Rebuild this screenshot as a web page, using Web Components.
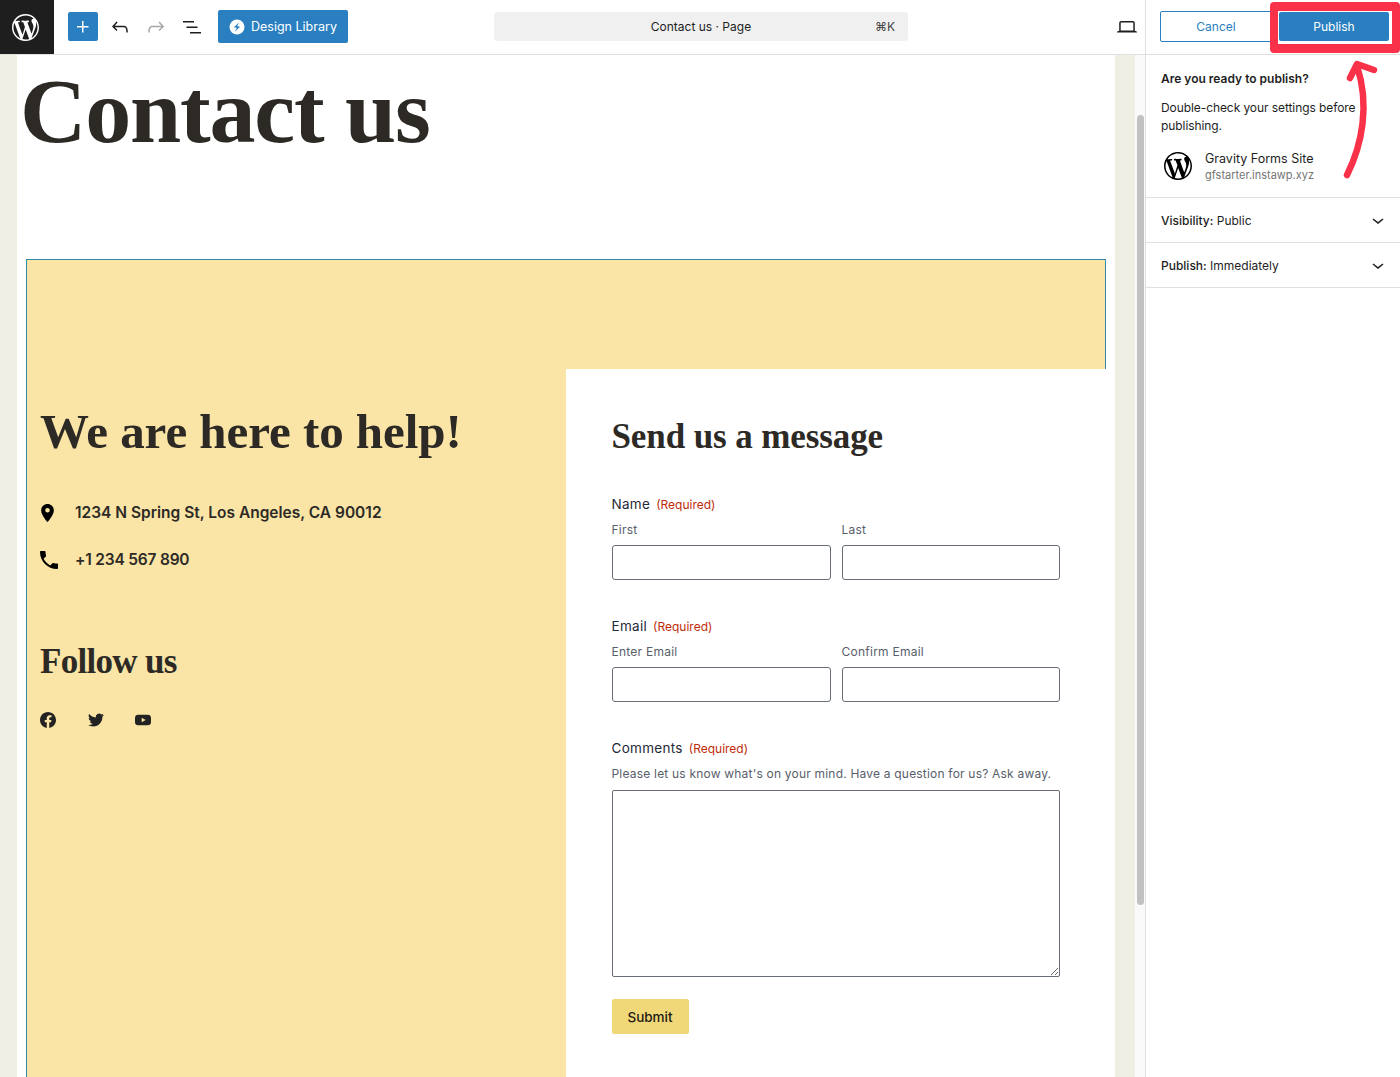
<!DOCTYPE html>
<html lang="en">
<head>
<meta charset="utf-8">
<title>Contact us - Page</title>
<style>
html, body { margin: 0; height: 100%; overflow: hidden; background: #fff; }
body { font-family: Inter, "Liberation Sans", sans-serif; }
</style>
</head>
<body>
<editor-app>
  <editor-topbar slot="top"></editor-topbar>
  <contact-canvas slot="canvas">
    <contact-info slot="info"></contact-info>
    <contact-form slot="form">
      <form-field label="Name">
        <sub-input label="First"></sub-input>
        <sub-input label="Last"></sub-input>
      </form-field>
      <form-field label="Email">
        <sub-input label="Enter Email"></sub-input>
        <sub-input label="Confirm Email"></sub-input>
      </form-field>
    </contact-form>
  </contact-canvas>
  <publish-panel slot="side">
    <panel-row label="Visibility:" value="Public"></panel-row>
    <panel-row label="Publish:" value="Immediately"></panel-row>
  </publish-panel>
</editor-app>

<script>
const WP_LOGO = 'M20 10c0-5.51-4.49-10-10-10C4.48 0 0 4.49 0 10c0 5.52 4.48 10 10 10 5.51 0 10-4.48 10-10zM7.78 15.37L4.37 6.22c.55-.02 1.17-.08 1.17-.08.5-.06.44-1.13-.06-1.11 0 0-1.45.11-2.37.11-.18 0-.37 0-.58-.01C4.12 2.69 6.87 1.11 10 1.11c2.33 0 4.45.87 6.05 2.34-.68-.11-1.65.39-1.65 1.58 0 .74.45 1.36.9 2.1.35.61.55 1.36.55 2.46 0 1.49-1.4 5-1.4 5l-3.03-8.37c.54-.02.82-.17.82-.17.5-.05.44-1.25-.06-1.22 0 0-1.44.12-2.38.12-.87 0-2.33-.12-2.33-.12-.5-.03-.56 1.2-.06 1.22l.92.08 1.26 3.41zM17.41 10c.24-.64.74-1.87.43-4.25.7 1.29 1.05 2.71 1.05 4.25 0 3.29-1.73 6.24-4.4 7.78.97-2.59 1.94-5.2 2.92-7.78zM6.1 18.09C3.12 16.65 1.11 13.53 1.11 10c0-1.3.23-2.48.72-3.59C3.25 10.3 4.67 14.2 6.1 18.09zm4.03-6.63l2.58 6.98c-.86.29-1.76.45-2.71.45-.79 0-1.57-.11-2.29-.33.81-2.38 1.62-4.74 2.42-7.1z';

class EditorApp extends HTMLElement {
  constructor() {
    super();
    this.attachShadow({ mode: 'open' });
    this.shadowRoot.innerHTML = `
<style>
:host { display: grid; grid-template-rows: 55px 1fr; grid-template-columns: 1145px 255px; width: 1400px; height: 1077px; overflow: hidden; position: relative; }
.top { grid-column: 1 / 3; }
.main { display: flex; min-height: 0; overflow: hidden; background: #f0efe6; }
.canvas { width: 1098px; margin-left: 17px; background: #fff; overflow: hidden; }
.track { width: 10px; margin-left: 20px; background: #fafafa; }
.thumb { width: 7px; height: 790px; margin: 60px 0 0 2px; background: #c1c1c1; border-radius: 4px; }
.side { min-height: 0; }
.callout { position: absolute; left: 1270px; top: 2px; width: 130px; height: 51px; box-sizing: border-box; border: solid #f9324a; border-width: 9px 8px; border-radius: 4px; }
.arrow { position: absolute; left: 1330px; top: 50px; }
</style>
<div class="top"><slot name="top"></slot></div>
<div class="main">
  <div class="canvas"><slot name="canvas"></slot></div>
  <div class="track"><div class="thumb"></div></div>
</div>
<div class="side"><slot name="side"></slot></div>
<div class="callout"></div>
<svg class="arrow" width="60" height="135" viewBox="0 0 60 135" fill="none" stroke="#f9324a" stroke-width="6.5" stroke-linecap="round" stroke-linejoin="round">
  <path d="M17 125C32 95 40 55 27 16"/>
  <path d="M20 28L27 14L44 20"/>
</svg>`;
  }
}

class EditorTopbar extends HTMLElement {
  constructor() {
    super();
    this.attachShadow({ mode: 'open' });
    this.shadowRoot.innerHTML = `
<style>
:host { display: grid; grid-template-columns: 494px 414px 237px 255px; height: 55px; box-sizing: border-box; border-bottom: 1px solid #e0e0e0; background: #fff; font-size: 13px; color: #1e1e1e; }
.left, .right, .side { display: flex; align-items: center; }
.logo { width: 54px; height: 54px; box-sizing: border-box; padding-right: 3px; background: #1e1e1e; display: flex; align-items: center; justify-content: center; }
.add { width: 30px; height: 29px; margin: 0 4px 1px 14px; background: #2a7fc1; border-radius: 2px; display: flex; align-items: center; justify-content: center; }
.tool { width: 36px; height: 36px; display: flex; align-items: center; justify-content: center; }
.library { width: 130px; height: 33px; margin: 0 0 1px 8px; background: #2a7fc1; color: #fff; font-size: 12.5px; border-radius: 2px; display: flex; align-items: center; gap: 6px; padding-left: 11px; box-sizing: border-box; }
.pill { height: 29px; margin-top: 12px; background: #f0f0f0; border-radius: 4px; display: flex; align-items: center; font-size: 12px; padding: 0 13px; }
.pill .title { flex: 1; text-align: center; padding-left: 20px; }
.pill .key { color: #444; }
.right { justify-content: flex-end; }
.side { border-left: 1px solid #e0e0e0; padding: 0 0 1px 14px; gap: 7px; }
.cancel, .publish { font-size: 12px; display: flex; align-items: center; justify-content: center; border-radius: 2px; box-sizing: border-box; }
.cancel { width: 112px; height: 31px; border: 1.5px solid #2a7fc1; color: #2a7fc1; }
.publish { width: 110px; height: 29px; background: #2a7fc1; color: #fff; }
</style>
<div class="left">
  <div class="logo"><svg width="27" height="27" viewBox="0 0 20 20" fill="#fff"><path d="${WP_LOGO}"/></svg></div>
  <div class="add"><svg width="24" height="24" viewBox="0 0 24 24" fill="#fff"><path d="M11 12.5V17.5H12.5V12.5H17.5V11H12.5V6H11V11H6V12.5H11Z"/></svg></div>
  <div class="tool"><svg width="24" height="24" viewBox="0 0 24 24" fill="#1e1e1e"><path d="M18.3 11.7c-.6-.6-1.4-.9-2.3-.9H6.7l2.9-3.3-1.1-1-4.5 5L8.5 16l1-1-2.7-2.7H16c.5 0 .9.2 1.3.5 1 1 1 3.4 1 4.5v.3h1.5v-.2c0-1.5 0-4.3-1.5-5.7z"/></svg></div>
  <div class="tool"><svg width="24" height="24" viewBox="0 0 24 24" fill="#a8a8a8"><path d="M15.6 6.5l-1.1 1 2.9 3.3H8c-.9 0-1.7.3-2.3.9-1.4 1.5-1.4 4.2-1.4 5.6v.2h1.5v-.3c0-1.1 0-3.5 1-4.5.3-.3.7-.5 1.3-.5h9.2L14.5 15l1.1 1.1 4.6-4.6-4.6-5z"/></svg></div>
  <div class="tool"><svg width="24" height="24" viewBox="0 0 24 24" fill="#1e1e1e"><path d="M3 6h11v1.5H3V6zm3.5 5.5h11V13h-11v-1.5zM21 17H10v1.5h11V17z"/></svg></div>
  <div class="library">
    <svg width="16" height="16" viewBox="0 0 16 16"><circle cx="8" cy="8" r="7.5" fill="#fff"/><path d="M10 3.4L4.8 8.3l3 .4-1.9 3.9 5.3-4.9-3-.4z" fill="#2a7fc1"/></svg>
    <span>Design Library</span>
  </div>
</div>
<div class="pill"><span class="title">Contact us · Page</span><span class="key">⌘K</span></div>
<div class="right"><div class="tool"><svg width="24" height="24" viewBox="0 0 24 24" fill="#1e1e1e"><path d="M20.5 16h-.7V8c0-1.1-.9-2-2-2H6.2c-1.1 0-2 .9-2 2v8h-.7c-.8 0-1.5.7-1.5 1.5h20c0-.8-.7-1.5-1.5-1.5zM5.7 8c0-.3.2-.5.5-.5h11.6c.3 0 .5.2.5.5v7.600H5.7V8z"/></svg></div></div>
<div class="side">
  <div class="cancel">Cancel</div>
  <div class="publish">Publish</div>
</div>`;
  }
}

class ContactCanvas extends HTMLElement {
  constructor() {
    super();
    this.attachShadow({ mode: 'open' });
    this.shadowRoot.innerHTML = `
<style>
:host { display: block; color: #2d2a26; }
h1 { margin: 0; padding: 10px 0 0 3px; font: 700 92px/1 "Liberation Serif", serif; letter-spacing: -1.2px; height: 204px; box-sizing: border-box; }
.group { display: flex; margin-left: 9px; width: 1080px; height: 900px; box-sizing: border-box; padding-top: 109px; border: 1px solid #2e8aa8; border-bottom: 0; background: #fae5a6; }
.info { width: 539px; }
.form { width: 541px; margin-right: -1px; background: #fff; }
</style>
<h1>Contact us</h1>
<div class="group">
  <div class="info"><slot name="info"></slot></div>
  <div class="form"><slot name="form"></slot></div>
</div>`;
  }
}

class ContactInfo extends HTMLElement {
  constructor() {
    super();
    this.attachShadow({ mode: 'open' });
    this.shadowRoot.innerHTML = `
<style>
:host { display: block; padding: 35px 0 0 13px; }
h2, h3 { margin: 0; font-family: "Liberation Serif", serif; font-weight: 700; }
h2 { font-size: 49px; line-height: 56px; letter-spacing: -.05px; }
h3 { font-size: 35px; line-height: 40px; letter-spacing: -.7px; margin-top: 70px; }
.line { display: flex; align-items: center; height: 24px; font: 600 15.5px/24px Inter, sans-serif; }
.line .ico { width: 35px; display: flex; }
.line.addr { margin-top: 41px; }
.line.tel { margin-top: 23px; letter-spacing: -.2px; }
.social { display: flex; gap: 31.5px; margin-top: 30px; }
.social svg { display: block; }
</style>
<h2>We are here to help!</h2>
<div class="line addr"><span class="ico"><svg width="13" height="18" viewBox="4 1 16 22" fill="#000" style="margin-left:1px"><path d="M12 1C7.7 1 4.2 4.5 4.2 8.8 4.2 14.8 12 23 12 23s7.8-8.200 7.800-14.200C19.800 4.500 16.300 1 12 1zm0 10.500a2.800 2.800 0 1 1 0-5.600 2.800 2.800 0 0 1 0 5.600z"/></svg></span><span>1234 N Spring St, Los Angeles, CA 90012</span></div>
<div class="line tel"><span class="ico"><svg width="18" height="18" viewBox="3 3 18 18" fill="#000"><path d="M6.620 10.790c1.440 2.830 3.760 5.140 6.590 6.590l2.200-2.200c.27-.27.67-.36 1.020-.24 1.120.37 2.330.57 3.570.57.55 0 1 .45 1 1V20c0 .55-.45 1-1 1-9.390 0-17-7.610-17-17 0-.55.45-1 1-1h3.500c.55 0 1 .45 1 1 0 1.250.2 2.450.57 3.570.11.35.03.74-.25 1.020l-2.200 2.200z"/></svg></span><span>+1 234 567 890</span></div>
<h3>Follow us</h3>
<div class="social">
  <svg width="16" height="16" viewBox="0 0 24 24" fill="#222"><path d="M24 12.070C24 5.400 18.630 0 12 0S0 5.400 0 12.070c0 6.030 4.390 11.020 10.130 11.930v-8.440H7.080v-3.490h3.050V9.410c0-3.020 1.790-4.690 4.530-4.690 1.310 0 2.680.24 2.680.24v2.970h-1.510c-1.490 0-1.960.93-1.960 1.890v2.250h3.330l-.53 3.490h-2.800V24C19.610 23.090 24 18.100 24 12.070z"/></svg>
  <svg width="16" height="16" viewBox="0 0 24 24" fill="#222"><path d="M23.950 4.570a10 10 0 0 1-2.820.77 4.960 4.960 0 0 0 2.160-2.720c-.95.55-2 .96-3.130 1.190a4.920 4.920 0 0 0-8.390 4.480C7.690 8.100 4.070 6.130 1.640 3.160a4.820 4.820 0 0 0-.67 2.480c0 1.710.87 3.210 2.190 4.100a4.900 4.900 0 0 1-2.230-.62v.06a4.920 4.920 0 0 0 3.950 4.830 4.940 4.940 0 0 1-2.210.08 4.940 4.940 0 0 0 4.600 3.420A9.870 9.870 0 0 1 0 19.540a14 14 0 0 0 7.560 2.210c9.050 0 14-7.500 14-13.980 0-.21 0-.42-.02-.63a9.940 9.940 0 0 0 2.410-2.570z"/></svg>
  <svg width="16" height="16" viewBox="0 0 24 24" fill="#222"><path fill-rule="evenodd" d="M5 4h14a5 5 0 0 1 5 5v6a5 5 0 0 1-5 5H5a5 5 0 0 1-5-5V9a5 5 0 0 1 5-5zm5 4.500v7l6-3.500z"/></svg>
</div>`;
  }
}

class ContactForm extends HTMLElement {
  constructor() {
    super();
    this.attachShadow({ mode: 'open' });
    this.shadowRoot.innerHTML = `
<style>
:host { display: block; padding: 46px 46px 0 46px; font-family: Inter, sans-serif; }
h2 { margin: 0 0 35px; font: 700 35px/44px "Liberation Serif", serif; letter-spacing: -.1px; color: #2d2a26; }
::slotted(form-field) { margin-bottom: 36px; }
.label { font-size: 13.5px; letter-spacing: .3px; line-height: 20px; color: #1f2937; }
.label em { font-style: normal; font-size: 12px; letter-spacing: 0; color: #c02b0a; margin-left: 6px; }
.hint { font-size: 12px; letter-spacing: .2px; line-height: 18px; margin-top: 6px; color: #585e6a; }
textarea { display: block; box-sizing: border-box; width: 448px; height: 187px; margin: 7px 0 0; border: 1px solid #686e77; border-radius: 2px; background: #fff; padding: 0; }
.submit { width: 77px; height: 35px; margin-top: 22px; background: #f0d878; color: #1e1a14; border-radius: 2px; font-size: 13.5px; font-weight: 500; display: flex; align-items: center; justify-content: center; }
</style>
<h2>Send us a message</h2>
<slot></slot>
<div>
  <div class="label">Comments<em>(Required)</em></div>
  <div class="hint">Please let us know what's on your mind. Have a question for us? Ask away.</div>
  <textarea></textarea>
</div>
<div class="submit">Submit</div>`;
  }
}

class FormField extends HTMLElement {
  constructor() {
    super();
    this.attachShadow({ mode: 'open' });
    this.shadowRoot.innerHTML = `
<style>
:host { display: block; font-family: Inter, sans-serif; }
.label { font-size: 13.5px; letter-spacing: .3px; line-height: 20px; color: #1f2937; }
.label em { font-style: normal; font-size: 12px; letter-spacing: 0; color: #c02b0a; margin-left: 6px; }
.cols { display: grid; grid-template-columns: 219px 218px; gap: 11px; margin-top: 6px; }
</style>
<div class="label"><span class="name"></span><em>(Required)</em></div>
<div class="cols"><slot></slot></div>`;
    this.shadowRoot.querySelector('.name').textContent = this.getAttribute('label');
  }
}

class SubInput extends HTMLElement {
  constructor() {
    super();
    this.attachShadow({ mode: 'open' });
    this.shadowRoot.innerHTML = `
<style>
:host { display: block; font-family: Inter, sans-serif; }
label { display: block; font-size: 12px; letter-spacing: .25px; line-height: 18px; color: #585e6a; margin-bottom: 6px; }
input { display: block; box-sizing: border-box; width: 100%; height: 35px; border: 1px solid #686e77; border-radius: 3px; background: #fff; padding: 0; }
</style>
<label></label>
<input type="text">`;
    this.shadowRoot.querySelector('label').textContent = this.getAttribute('label');
  }
}

class PublishPanel extends HTMLElement {
  constructor() {
    super();
    this.attachShadow({ mode: 'open' });
    this.shadowRoot.innerHTML = `
<style>
:host { display: block; height: 100%; box-sizing: border-box; border-left: 1px solid #e0e0e0; background: #fff; color: #1e1e1e; font-size: 12px; }
.intro { height: 143px; box-sizing: border-box; padding: 15px 15px 0; border-bottom: 1px solid #e0e0e0; }
.ask { font-weight: 600; line-height: 18px; }
p { margin: 11px 0 0; line-height: 18px; letter-spacing: -.08px; }
.site { display: flex; align-items: center; gap: 13px; margin: 16px 0 0 3px; }
.site svg { display: block; margin-top: -2px; }
.name { font-size: 12.5px; line-height: 16px; color: #1e1e1e; }
.url { font-size: 11px; line-height: 16px; color: #757575; }
</style>
<div class="intro">
  <div class="ask">Are you ready to publish?</div>
  <p>Double-check your settings before publishing.</p>
  <div class="site">
    <svg width="28" height="28" viewBox="0 0 20 20" fill="#000"><path d="${WP_LOGO}"/></svg>
    <div><div class="name">Gravity Forms Site</div><div class="url">gfstarter.instawp.xyz</div></div>
  </div>
</div>
<slot></slot>`;
  }
}

class PanelRow extends HTMLElement {
  constructor() {
    super();
    this.attachShadow({ mode: 'open' });
    this.shadowRoot.innerHTML = `
<style>
:host { display: flex; align-items: center; justify-content: space-between; height: 45px; box-sizing: border-box; border-bottom: 1px solid #e0e0e0; padding: 0 10px 0 15px; font-size: 12px; color: #1e1e1e; }
b { font-weight: 500; }
svg { display: block; }
</style>
<span><b></b> <span class="value"></span></span>
<svg width="24" height="24" viewBox="0 0 24 24" fill="#1e1e1e"><path d="M17.5 11.6L12 16l-5.5-4.4.9-1.2L12 14l4.5-3.6 1 1.2z"/></svg>`;
    this.shadowRoot.querySelector('b').textContent = this.getAttribute('label');
    this.shadowRoot.querySelector('.value').textContent = this.getAttribute('value');
  }
}

customElements.define('editor-app', EditorApp);
customElements.define('editor-topbar', EditorTopbar);
customElements.define('contact-canvas', ContactCanvas);
customElements.define('contact-info', ContactInfo);
customElements.define('contact-form', ContactForm);
customElements.define('form-field', FormField);
customElements.define('sub-input', SubInput);
customElements.define('publish-panel', PublishPanel);
customElements.define('panel-row', PanelRow);
</script>
</body>
</html>
